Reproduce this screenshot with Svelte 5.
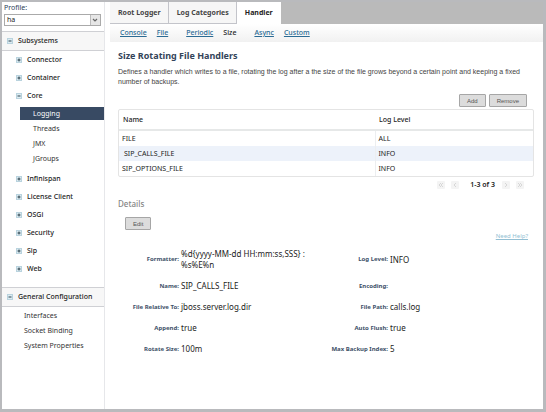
<script>
  const subsystems = [
    { name: 'Connector' },
    { name: 'Container' },
    { name: 'Core', children: ['Logging', 'Threads', 'JMX', 'JGroups'] },
    { name: 'Infinispan' },
    { name: 'License Client' },
    { name: 'OSGi' },
    { name: 'Security' },
    { name: 'Sip' },
    { name: 'Web' }
  ];
  const general = ['Interfaces', 'Socket Binding', 'System Properties'];
  const tabs = ['Root Logger', 'Log Categories', 'Handler'];
  const kinds = [
    { name: 'Console' },
    { name: 'File', wide: true },
    { name: 'Periodic' },
    { name: 'Size', wide: true },
    { name: 'Async' },
    { name: 'Custom' }
  ];
  const handlers = [
    { name: 'FILE', level: 'ALL' },
    { name: 'SIP_CALLS_FILE', level: 'INFO' },
    { name: 'SIP_OPTIONS_FILE', level: 'INFO' }
  ];
  const details = [
    ['Formatter', '%d{yyyy-MM-dd HH:mm:ss,SSS} : %s%E%n', 'Log Level', 'INFO'],
    ['Name', 'SIP_CALLS_FILE', 'Encoding', ''],
    ['File Relative To', 'jboss.server.log.dir', 'File Path', 'calls.log'],
    ['Append', 'true', 'Auto Flush', 'true'],
    ['Rotate Size', '100m', 'Max Backup Index', '5']
  ];
  let profile = $state('ha');
  let tab = $state('Handler');
  let selected = $state('SIP_CALLS_FILE');
</script>

{#snippet toggle(open)}
  <svg class="toggle" viewBox="0 0 6 6" aria-hidden="true">
    <rect x="0.5" y="0.5" width="5" height="5" fill="#dcebf2" stroke="#b9d3de" />
    <path d={open ? 'M1.5 3H4.5' : 'M1.5 3H4.5M3 1.5V4.5'} stroke="#2f4650" stroke-width="1" />
  </svg>
{/snippet}

{#snippet pager(label, d)}
  <button class="page" aria-label={label}>
    <svg viewBox="0 0 8 8" aria-hidden="true"><path {d} fill="none" stroke="#cfcfcf" stroke-width="0.8" /></svg>
  </button>
{/snippet}

<div class="app">
  <aside>
    <div class="profile">
      <label for="profile">Profile:</label>
      <div class="combo">
        <select id="profile" bind:value={profile}>
          <option>ha</option>
          <option>default</option>
        </select>
        <span class="arrow">
          <svg viewBox="0 0 8 8" aria-hidden="true"><path d="M2 3L4 5L6 3" fill="none" stroke="#666" stroke-width="1.2" /></svg>
        </span>
      </div>
    </div>
    <h2>{@render toggle(true)}Subsystems</h2>
    <ul class="tree">
      {#each subsystems as s}
        <li>
          <a class="node" href="#{s.name}">{@render toggle(!!s.children)}{s.name}</a>
          {#if s.children}
            <ul class="sub">
              {#each s.children as c}
                <li><a href="#{c}" class:current={c === 'Logging'}>{c}</a></li>
              {/each}
            </ul>
          {/if}
        </li>
      {/each}
    </ul>
    <h2>{@render toggle(true)}General Configuration</h2>
    <ul class="general">
      {#each general as g}
        <li><a href="#{g}">{g}</a></li>
      {/each}
    </ul>
  </aside>

  <main>
    <div class="tabs" role="tablist">
      {#each tabs as t}
        <button role="tab" aria-selected={t === tab} class:active={t === tab} onclick={() => (tab = t)}>{t}</button>
      {/each}
    </div>
    <nav>
      {#each kinds as k}
        {#if k.name === 'Size'}
          <span class:wide={k.wide}>{k.name}</span>
        {:else}
          <a href="#{k.name}" class:wide={k.wide}>{k.name}</a>
        {/if}
      {/each}
    </nav>
    <section>
      <h1>Size Rotating File Handlers</h1>
      <p>Defines a handler which writes to a file, rotating the log after a the size of the file grows beyond a certain point and keeping a fixed number of backups.</p>
      <div class="tools">
        <button>Add</button>
        <button>Remove</button>
      </div>
      <div class="grid">
        <table>
          <thead>
            <tr><th>Name</th><th>Log Level</th></tr>
          </thead>
          <tbody>
            {#each handlers as h}
              <tr class:selected={h.name === selected} onclick={() => (selected = h.name)}>
                <td>{h.name}</td><td>{h.level}</td>
              </tr>
            {/each}
          </tbody>
        </table>
      </div>
      <div class="pager">
        {@render pager('First page', 'M4 2L2 4L4 6M6 2L4 4L6 6')}
        {@render pager('Previous page', 'M5 2L3 4L5 6')}
        <span>1-3 of 3</span>
        {@render pager('Next page', 'M3 2L5 4L3 6')}
        {@render pager('Last page', 'M2 2L4 4L2 6M4 2L6 4L4 6')}
      </div>
      <h3>Details</h3>
      <div class="edit"><button>Edit</button></div>
      <div class="help"><a href="#help">Need Help?</a></div>
      <dl>
        {#each details as [a, av, b, bv]}
          <dt>{a}:</dt><dd>{av}</dd>
          <dt>{b}:</dt><dd>{bv}</dd>
        {/each}
      </dl>
    </section>
  </main>
</div>

<style>
  :global(body) {
    margin: 0;
    background: #b9babd;
  }
  .app {
    box-sizing: border-box;
    min-height: 100vh;
    display: grid;
    grid-template-columns: 103px 1fr;
    column-gap: 5px;
    padding: 2px 3px 3px 2px;
    background: linear-gradient(#fff, #fff) content-box, #b9babd;
    font: 7px/10px 'Noto Sans', 'Open Sans', sans-serif;
    color: #222;
  }
  ul {
    margin: 0;
    padding: 0;
    list-style: none;
  }
  button,
  select {
    font: inherit;
    color: inherit;
    margin: 0;
    padding: 0;
  }
  aside {
    border-right: 1px solid #e6e7ea;
  }
  .profile {
    padding: 1px 3px 5px 2px;
  }
  label {
    display: block;
    color: #2d4259;
  }
  .combo {
    position: relative;
    margin-top: 1px;
  }
  select {
    display: block;
    width: 100%;
    height: 12px;
    appearance: none;
    background: #fff;
    border: 1px solid #aaa;
    border-radius: 0;
    padding: 0 2px;
    line-height: 8px;
  }
  .arrow {
    position: absolute;
    inset: 1px 1px 1px auto;
    width: 9px;
    background: #e6e6e6;
    border-left: 1px solid #bbb;
    display: flex;
    align-items: center;
    pointer-events: none;
  }
  .arrow svg {
    width: 8px;
    height: 8px;
  }
  h2 {
    display: flex;
    align-items: center;
    height: 18px;
    margin: 0;
    padding-left: 5px;
    gap: 5px;
    font-size: 7px;
    font-weight: 500;
    background: #f7f7f7;
    border-top: 1px solid #cfd0d4;
    border-bottom: 1px solid #cfd0d4;
  }
  .toggle {
    width: 6px;
    height: 6px;
    flex: none;
    margin-bottom: 1px;
  }
  a {
    color: inherit;
    text-decoration: none;
  }
  .node {
    display: flex;
    align-items: center;
    height: 18px;
    padding-left: 14px;
    gap: 5px;
    font-weight: 500;
  }
  .tree {
    padding-bottom: 9px;
  }
  .sub {
    padding: 2px 0 3px;
    color: #333;
  }
  .sub a {
    display: block;
    height: 13px;
    margin: 0 0 2px 18px;
    padding-left: 13px;
    line-height: 13px;
  }
  .sub a.current {
    background: #384a63;
    color: #fff;
  }
  .general {
    padding: 1px 0 0 22px;
    line-height: 15px;
    color: #333;
  }
  main {
    min-width: 0;
  }
  .tabs {
    display: flex;
    height: 22px;
    background: #bababa;
  }
  .tabs button {
    border: 0;
    border-right: 1px solid #c3c4ca;
    border-bottom: 1px solid #c3c4ca;
    background: #f6f6f6;
    padding: 0 7px 0 8px;
    font-weight: 700;
    color: #444;
  }
  .tabs button.active {
    background: #fff;
    border-color: #fff;
    color: #222;
  }
  nav {
    display: flex;
    align-items: center;
    height: 18px;
    padding-left: 10px;
    gap: 10px;
    background: linear-gradient(#fff, #f1f1f1);
    font-weight: 500;
  }
  nav .wide {
    margin-right: 8px;
  }
  nav a {
    color: #2a6b94;
    text-decoration: underline;
  }
  section {
    padding: 7px 9px 0 8px;
  }
  h1 {
    margin: 0;
    font-size: 9px;
    line-height: 14px;
    font-weight: 700;
    color: #334459;
  }
  p {
    margin: 4px 8px 0 0;
    font: 7px/10px 'Liberation Sans', Arial, sans-serif;
    color: #444;
  }
  .tools {
    display: flex;
    justify-content: flex-end;
    gap: 3px;
    padding: 7px 7px 2px 0;
  }
  .tools button,
  .edit button {
    box-sizing: border-box;
    height: 13px;
    padding: 0 7px;
    border: 1px solid #a6a6a6;
    border-radius: 1px;
    background: #dcdcdc;
    font: 6px/10px 'Liberation Sans', Arial, sans-serif;
    color: #555;
  }
  .grid {
    border: 1px solid #e4e4e4;
    border-radius: 2px;
  }
  table {
    width: 100%;
    border-collapse: collapse;
    table-layout: fixed;
  }
  th,
  td {
    padding: 0 3px;
    text-align: left;
  }
  th:first-child {
    width: 248px;
  }
  th {
    height: 19px;
    padding: 0 4px;
    font-weight: 500;
    border-bottom: 2px solid #e6e8e8;
  }
  td {
    height: 15px;
  }
  td + td {
    border-left: 1px solid #eceef0;
  }
  .selected {
    background: #edf2fa;
  }
  .selected td:first-child {
    padding-left: 5px;
  }
  .pager {
    display: flex;
    align-items: center;
    justify-content: flex-end;
    gap: 6px;
    padding: 3px 10px 0 0;
    font-weight: 600;
  }
  .pager span {
    margin: 0 1px 0 5px;
  }
  .page {
    display: flex;
    width: 8px;
    height: 8px;
    border: 0;
    border-radius: 1px;
    background: #f4f4f4;
  }
  .page svg {
    width: 8px;
    height: 8px;
  }
  h3 {
    margin: 8px 0 0;
    font-size: 8px;
    line-height: 12px;
    font-weight: 500;
    color: #858585;
  }
  .edit {
    display: flex;
    padding: 7px 0 0 7px;
  }
  .help {
    display: flex;
    justify-content: flex-end;
    padding: 1px 6px 0 0;
    font-size: 6px;
  }
  .help a {
    color: #93bfd3;
    text-decoration: underline;
  }
  dl {
    display: grid;
    grid-template-columns: 61px minmax(0, 139px) 70px minmax(0, 1fr);
    align-items: center;
    row-gap: 10px;
    margin: 7px 0 0;
  }
  dt {
    text-align: right;
    font-size: 6px;
    font-weight: 700;
    color: #3d5068;
  }
  dd {
    margin: 0;
    padding-left: 2px;
    max-width: 128px;
    min-height: 11px;
    font-size: 8px;
    line-height: 11px;
  }
</style>
